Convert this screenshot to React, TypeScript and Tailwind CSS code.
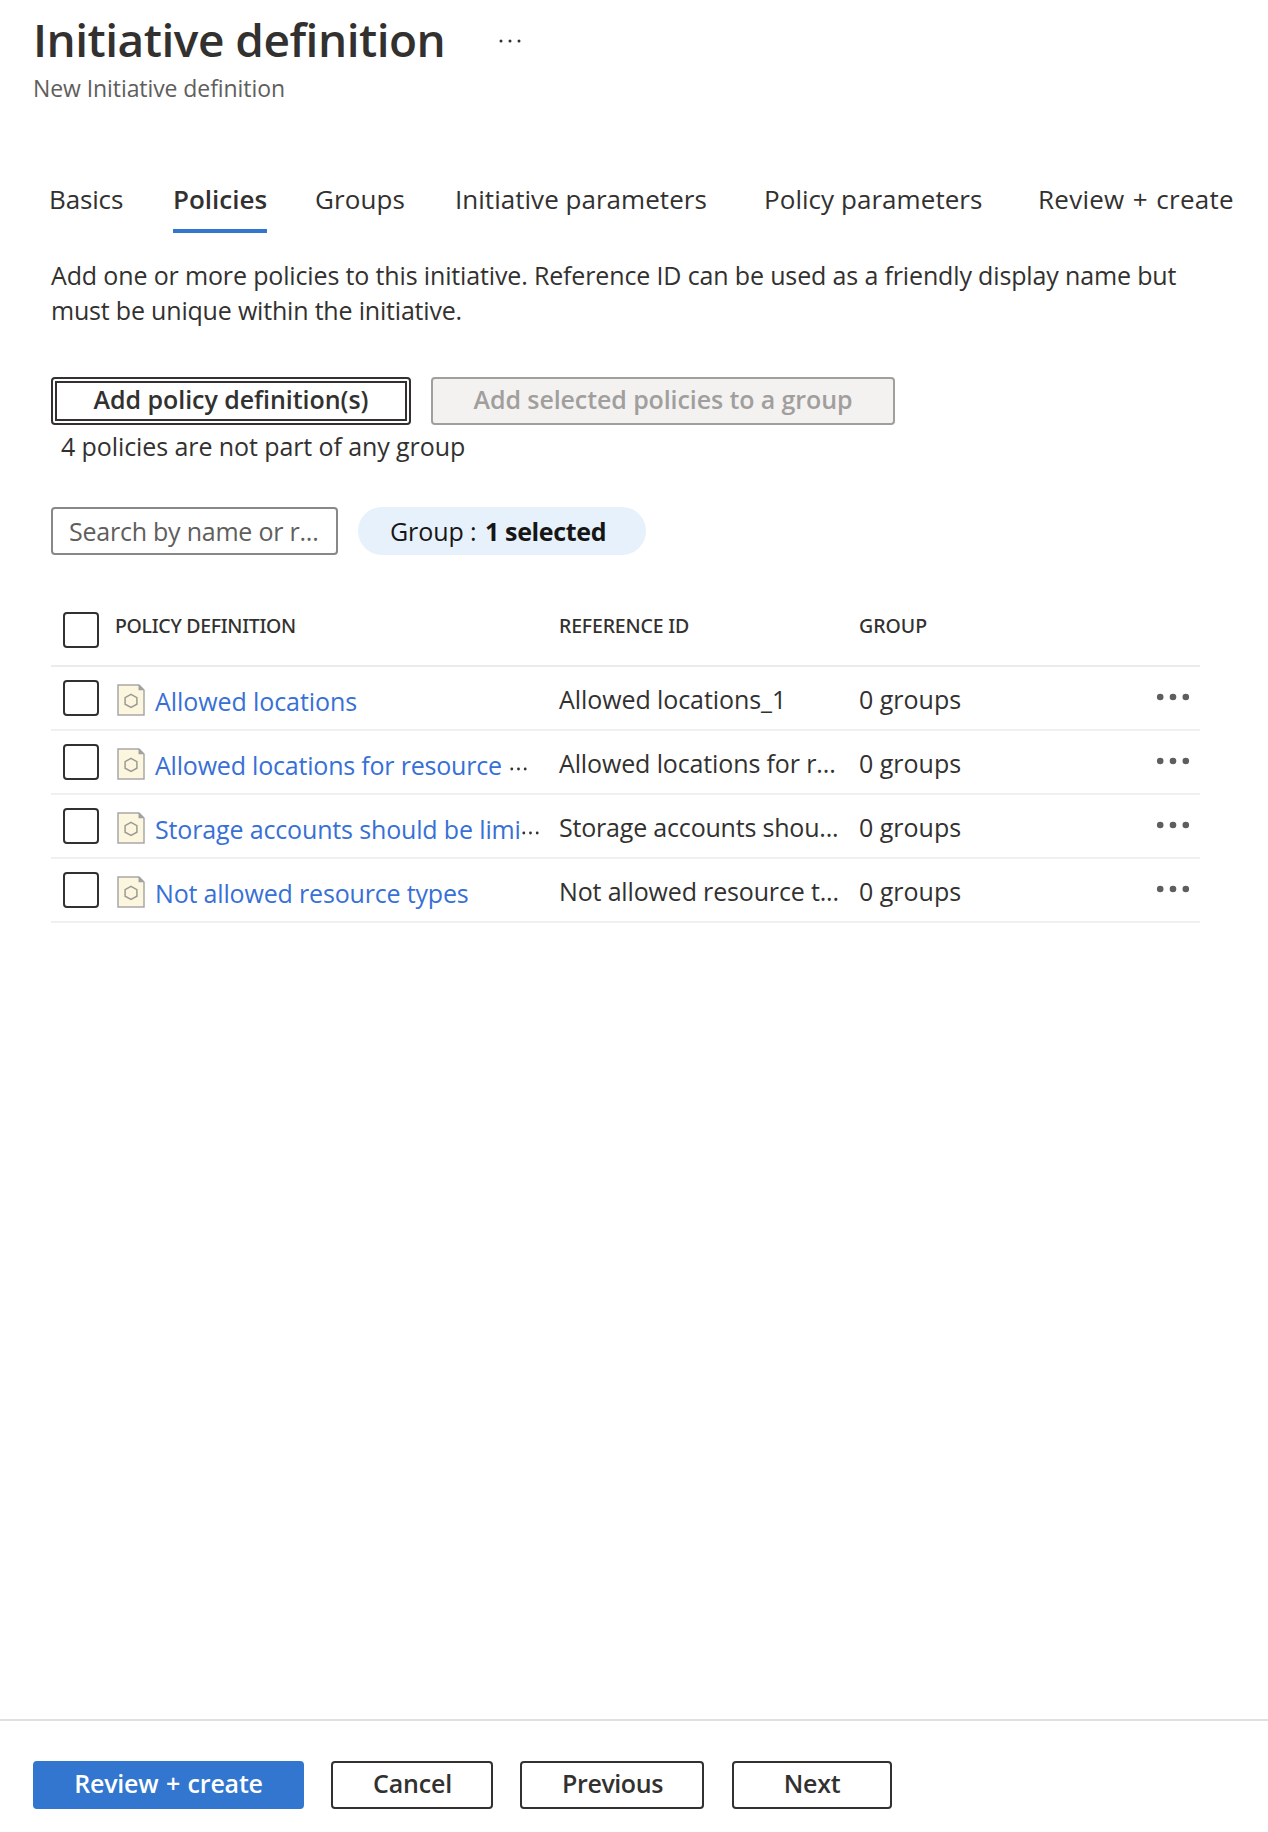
import React from "react";

const tabs = [
  { label: "Basics", place: "ml-[49px] w-[76px]", text: "tracking-[-0.15px]" },
  { label: "Policies", place: "ml-[48px] w-[94px]", text: "font-semibold", active: true },
  { label: "Groups", place: "ml-[48px] w-[92px]", text: "tracking-[0.1px]" },
  { label: "Initiative parameters", place: "ml-[48px] w-[254px]", text: "tracking-[0.03px]" },
  { label: "Policy parameters", place: "ml-[55px] w-[219px]", text: "tracking-[0.05px]" },
  { label: "Review + create", place: "ml-[55px] w-[198px]", text: "tracking-[0.25px] [word-spacing:1.4px]" },
];

const rows = [
  { name: "Allowed locations", ref: "Allowed locations_1", nameCls: "tracking-[-0.08px]", refCls: "tracking-[-0.08px]" },
  {
    name: "Allowed locations for resource",
    cut: "ml-[8px]",
    ref: "Allowed locations for r...",
    nameCls: "tracking-[-0.2px]",
    refCls: "tracking-[-0.13px]",
  },
  {
    name: "Storage accounts should be limi",
    cut: "ml-[1px]",
    ref: "Storage accounts shou...",
    nameCls: "tracking-[-0.15px]",
    refCls: "tracking-[-0.19px]",
  },
  {
    name: "Not allowed resource types",
    ref: "Not allowed resource t...",
    nameCls: "tracking-[-0.17px]",
    refCls: "tracking-[-0.16px]",
  },
];

const columns = "grid grid-cols-[64px_444px_300px_297px_44px] border-b-2";

function Checkbox({ className }: { className: string }) {
  return (
    <span
      role="checkbox"
      aria-checked="false"
      className={`ml-3 block h-9 w-9 rounded-[4px] border-2 border-[#323130] bg-white ${className}`}
    />
  );
}

function PolicyIcon() {
  return (
    <svg width="28" height="32" viewBox="0 0 28 32" className="mt-[17px] shrink-0">
      <path d="M1 1H22L27 6V31H1Z" fill="#fdf6df" stroke="#a6a8a9" strokeWidth="1.5" />
      <path d="M21.5 0.8V6.2H27.2Z" fill="#a0a0a0" />
      <path d="M14 10.3L19.9 13.6V20.2L14 23.5L8.1 20.2V13.6Z" fill="none" stroke="#9c9a94" strokeWidth="1.5" />
    </svg>
  );
}

function SmallDots({ className }: { className: string }) {
  return (
    <svg width="17" height="4" viewBox="0 0 17 4" className={`mt-[36px] shrink-0 fill-[#323130] ${className}`}>
      <circle cx="1.8" cy="2" r="1.4" />
      <circle cx="8.5" cy="2" r="1.4" />
      <circle cx="15.2" cy="2" r="1.4" />
    </svg>
  );
}

function HeaderLabel({ children, className }: { children: string; className: string }) {
  return (
    <span className={`font-['Noto_Sans'] text-[19.5px] leading-[40px] font-medium ${className}`}>{children}</span>
  );
}

function Button({ label, className }: { label: string; className: string }) {
  return (
    <button
      className={`flex h-12 items-start justify-center rounded-[4px] border-2 text-[25px] leading-[40px] font-semibold whitespace-nowrap ${className}`}
    >
      {label}
    </button>
  );
}

export default function App() {
  return (
    <div className="flex h-[1832px] w-[1268px] flex-col overflow-hidden bg-white font-['Open_Sans','Noto_Sans',sans-serif] text-[#323130]">
      <header className="h-[173px] pl-[33px]">
        <div className="flex h-[76px]">
          <h1 className="w-[466px] text-[46px] leading-[78px] font-semibold tracking-[-0.5px] whitespace-nowrap">
            Initiative definition
          </h1>
          <svg width="24" height="6" viewBox="0 0 24 6" className="mt-[38px] fill-[#323130]">
            <circle cx="2" cy="3" r="1.5" />
            <circle cx="11" cy="3" r="1.5" />
            <circle cx="20" cy="3" r="1.5" />
          </svg>
        </div>
        <p className="-mt-[1px] text-[23px] leading-[27px] tracking-[-0.08px] text-[#605e5c]">
          New Initiative definition
        </p>
      </header>

      <nav className="flex h-[60px]">
        {tabs.map((t) => (
          <div
            key={t.label}
            className={`${t.place} ${t.text} flex-none border-b-4 text-[26px] leading-[52px] whitespace-nowrap ${
              t.active ? "border-[#3276cf]" : "border-transparent"
            }`}
          >
            {t.label}
          </div>
        ))}
      </nav>

      <main className="flex flex-1 flex-col pl-[51px] text-[25px]">
        <p className="mt-[25px] leading-[35px] tracking-[-0.145px]">
          Add one or more policies to this initiative. Reference ID can be used as a friendly display name but
          <br />
          <span className="tracking-[-0.19px]">must be unique within the initiative.</span>
        </p>

        <div className="mt-[49px] flex gap-5">
          <div className="rounded-[4px] border-2 border-[#323130] p-[2px]">
            <button className="flex h-10 w-[352px] items-start justify-center border-2 border-[#323130] text-[25px] leading-[33px] font-semibold tracking-[-0.05px]">
              Add policy definition(s)
            </button>
          </div>
          <Button
            label="Add selected policies to a group"
            className="w-[464px] border-[#a19f9d] bg-[#f3f2f1] tracking-[-0.1px] text-[#a19f9d]"
          />
        </div>
        <p className="mt-[1px] ml-[10px] leading-[40px] tracking-[-0.09px]">4 policies are not part of any group</p>

        <div className="mt-[41px] flex gap-5">
          <div className="h-12 w-[287px] rounded-[4px] border-2 border-[#8a8886] pl-[16px] leading-[44px] tracking-[-0.23px] text-[#605e5c]">
            Search by name or r...
          </div>
          <div className="flex h-12 w-[288px] rounded-full bg-[#e7f1fb] pl-[32px] leading-[48px] text-[#161616]">
            <span className="w-[95px] tracking-[-0.09px]">Group :</span>
            <span className="font-bold tracking-[-0.35px]">1 selected</span>
          </div>
        </div>

        <section className="mt-[51px] w-[1149px]">
          <div className={`${columns} h-[61px] border-[#ebebeb]`}>
            <Checkbox className="mt-[6px]" />
            <HeaderLabel className="tracking-[-0.3px]">POLICY DEFINITION</HeaderLabel>
            <HeaderLabel className="tracking-[-0.17px]">REFERENCE ID</HeaderLabel>
            <HeaderLabel className="tracking-normal">GROUP</HeaderLabel>
          </div>
          {rows.map((r) => (
            <div key={r.name} className={`${columns} h-16 border-[#f0f0f0] whitespace-nowrap`}>
              <Checkbox className="mt-[13px]" />
              <div className="flex pl-[2px]">
                <PolicyIcon />
                <a className={`mt-[14px] ml-[10px] leading-[40px] text-[#3770d6] ${r.nameCls}`}>{r.name}</a>
                {r.cut && <SmallDots className={r.cut} />}
              </div>
              <span className={`mt-[12px] leading-[40px] ${r.refCls}`}>{r.ref}</span>
              <span className="mt-[12px] leading-[40px]">0 groups</span>
              <svg width="34" height="8" viewBox="0 0 34 8" className="mt-[26px] fill-[#605e5c]">
                <circle cx="4.2" cy="4" r="3.3" />
                <circle cx="17" cy="4" r="3.3" />
                <circle cx="29.8" cy="4" r="3.3" />
              </svg>
            </div>
          ))}
        </section>
      </main>

      <footer className="flex h-[113px] border-t-2 border-[#e0e0e0] pt-10 pl-[33px]">
        <Button
          label="Review + create"
          className="w-[271px] border-[#3276cf] bg-[#3276cf] tracking-[-0.2px] [word-spacing:1.2px] text-white"
        />
        <Button label="Cancel" className="ml-[27px] w-[162px] border-[#323130] pl-px tracking-[-0.2px]" />
        <Button label="Previous" className="ml-[27px] w-[184px] border-[#323130] pl-px tracking-[-0.42px]" />
        <Button label="Next" className="ml-[28px] w-[160px] border-[#323130] tracking-[-0.25px]" />
      </footer>
    </div>
  );
}
